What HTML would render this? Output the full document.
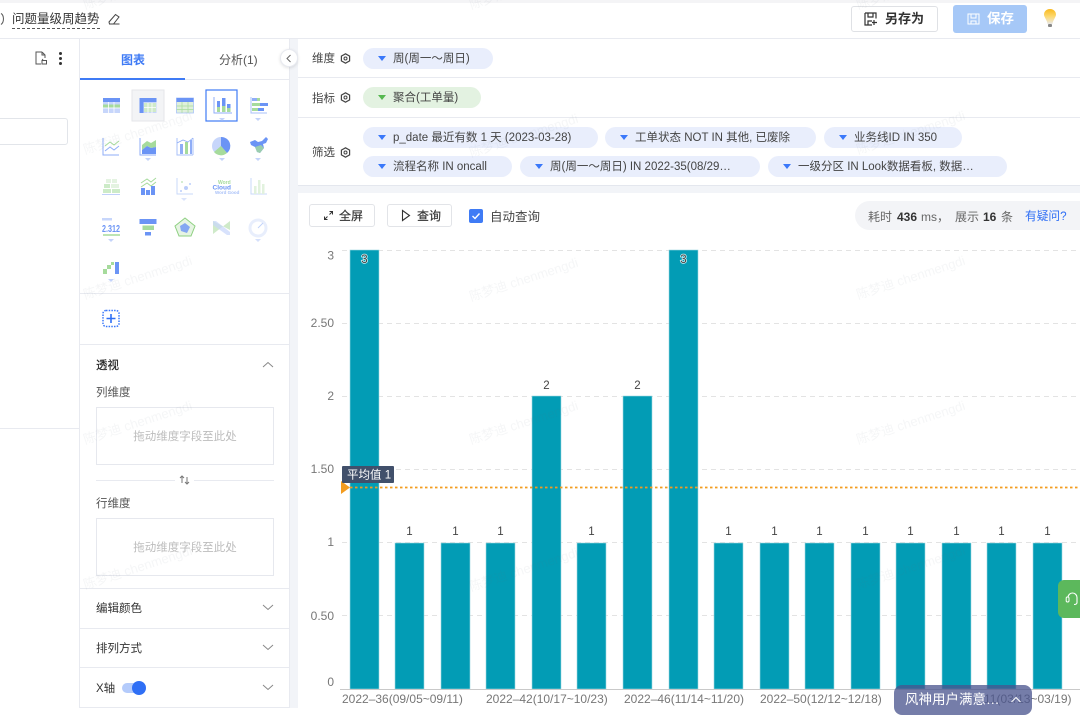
<!DOCTYPE html>
<html><head><meta charset="utf-8">
<style>
*{box-sizing:border-box}
html,body{margin:0;padding:0}
body{width:1080px;height:708px;overflow:hidden;position:relative;background:#fff;font-family:"Liberation Sans","Noto Sans CJK SC",sans-serif;color:#333;font-size:12px}
.a{position:absolute}
.t{position:absolute;white-space:nowrap;line-height:16px;margin-top:1px}
.line{position:absolute;background:#e8eaf0}
.pill{position:absolute;height:21px;border-radius:11px;background:#e9eefc;font-size:11.500px;line-height:22px;color:#444;white-space:nowrap;padding-left:30px}
.pill:before{content:"";position:absolute;left:15px;top:8px;border-left:4.500px solid transparent;border-right:4.500px solid transparent;border-top:5.500px solid #3a78fa}
.pill.g{background:#e3f2e1}
.pill.g:before{border-top-color:#55b84f}
.btn{position:absolute;background:#fff;border:1px solid #e2e4e8;border-radius:3px;font-size:12px;color:#333;white-space:nowrap}
.drop{position:absolute;left:96px;width:178px;height:58px;border:1px solid #e6e8ee;text-align:center;line-height:59px;color:#bdbdbd;font-size:11.500px}
.wm{position:absolute;white-space:nowrap;font-size:13px;line-height:20px;color:rgba(110,120,140,.065);transform:rotate(-18deg);transform-origin:left bottom;pointer-events:none;z-index:20}
svg{display:block}
</style></head><body>

<!-- top bar -->
<div class="a" style="left:0;top:0;width:1080px;height:3px;background:#f4f4f6"></div>
<svg class="a" style="left:0;top:12px" width="6" height="14"><path d="M1 1.500C4 3 4.500 10 1 12.500" fill="none" stroke="#555" stroke-width="1"/></svg>
<div class="t" style="left:12px;top:10px;font-size:12.500px;color:#333;border-bottom:1px dashed #555;height:18px;width:88px">问题量级周趋势</div>
<svg class="a" style="left:107px;top:12px" width="14" height="14"><path d="M2 10 8.500 2.500 12 5 6.500 12H2.500ZM5 12H12.500" fill="none" stroke="#444" stroke-width="1"/></svg>
<div class="btn" style="left:851px;top:6px;width:87px;height:26px;border-color:#dfe1e5;font-size:13px;font-weight:bold;line-height:24px;padding-left:33px">另存为</div>
<svg class="a" style="left:864px;top:12px" width="14" height="14"><path d="M1 1H12V6.500M1 1V13H8M4 1V5H9V1M4 13V9H8M10 8V13M8 10.500H13" fill="none" stroke="#333" stroke-width="1.200"/></svg>
<div class="a" style="left:953px;top:5px;width:74px;height:28px;background:#a6c8f7;border-radius:3px;color:#fff;font-size:13.500px;font-weight:bold;line-height:28px;padding-left:34px">保存</div>
<svg class="a" style="left:967px;top:13px" width="13" height="12"><path d="M1 1H12V11H1ZM4 1V5H9V1M4 11V8H9V11" fill="none" stroke="#fff" stroke-width="1"/></svg>
<svg class="a" style="left:1042px;top:8px" width="16" height="21"><defs><linearGradient id="b" x1="0" y1="0" x2="0" y2="1"><stop offset="0" stop-color="#f9b91e"/><stop offset=".5" stop-color="#fdd970"/><stop offset="1" stop-color="#e8e8e8"/></linearGradient></defs><path d="M8 1C3.500 1 2 4.500 2 6.500 2 9 5 12 5.500 16H10.500C11 12 14 9 14 6.500 14 4.500 12.500 1 8 1Z" fill="url(#b)"/><rect x="6" y="16" width="4" height="3" rx="1" fill="#888"/></svg>
<div class="line" style="left:0;top:38px;width:1080px;height:1px"></div>

<!-- left column -->
<svg class="a" style="left:34px;top:51px" width="14" height="14"><path d="M8 1H2V13H7M8 1 11 4V7M8 1V4H11" fill="none" stroke="#555" stroke-width="1"/><path d="M8 9.500H12.500V13H8Z M9 8 8 9.500" fill="none" stroke="#555" stroke-width="1"/></svg>
<div class="a" style="left:59px;top:52px;width:3px;height:3px;border-radius:2px;background:#333"></div>
<div class="a" style="left:59px;top:57px;width:3px;height:3px;border-radius:2px;background:#333"></div>
<div class="a" style="left:59px;top:62px;width:3px;height:3px;border-radius:2px;background:#333"></div>
<div class="a" style="left:-10px;top:118px;width:78px;height:27px;border:1px solid #e2e5ea;border-radius:3px"></div>
<div class="line" style="left:0;top:428px;width:80px;height:1px"></div>

<!-- config panel -->
<div class="line" style="left:79px;top:39px;width:1px;height:669px"></div>
<div class="a" style="left:290px;top:39px;width:8px;height:669px;background:#f2f4f8"></div>
<div class="line" style="left:289px;top:39px;width:1px;height:669px"></div>
<div class="t" style="left:121px;top:51px;color:#3f7bf5;font-size:12px;font-weight:bold">图表</div>
<div class="t" style="left:219px;top:51px;color:#555;font-size:12px">分析(1)</div>
<div class="line" style="left:80px;top:79px;width:210px;height:1px"></div>
<div class="a" style="left:80px;top:78px;width:105px;height:2px;background:#3f7bf5"></div>
<div class="a" style="left:280px;top:49px;width:18px;height:18px;border-radius:9px;background:#fff;border:1px solid #e8eaf0;box-shadow:0 1px 3px rgba(0,0,0,.12)"></div>
<svg class="a" style="left:285px;top:54px" width="8" height="9"><path d="M5.500 1 2 4.500 5.500 8" fill="none" stroke="#666" stroke-width="1"/></svg>

<svg class="a" style="left:80px;top:80px" width="210" height="210">
<g>
<rect x="52" y="10" width="32" height="31" fill="#f3f4f6" stroke="#e5e6ea"/>
<rect x="126" y="10" width="31" height="31" fill="#fff" stroke="#3f7bf5" stroke-width="1.200"/>
<!-- table1 -->
<rect x="23" y="18" width="17" height="15" fill="#c7d6fb"/><rect x="23" y="18" width="17" height="4" fill="#6b94f5"/><rect x="23" y="24.500" width="17" height="3" fill="#a6db9c"/><path d="M28.500 22V33M34 22V33M23 28H40" stroke="#fff" stroke-width=".8"/>
<!-- table2 -->
<rect x="59.500" y="18" width="17" height="15" fill="#c7d6fb"/><rect x="59.500" y="18" width="17" height="4" fill="#6b94f5"/><rect x="59.500" y="18" width="4" height="15" fill="#6b94f5"/><rect x="64" y="23" width="12" height="9" fill="#cfeac9"/><path d="M68 23V33M72 23V33M64 27.500H76" stroke="#fff" stroke-width=".8"/>
<!-- table3 -->
<rect x="96.500" y="18" width="17" height="15" fill="#dff0db" stroke="#aac3f9" stroke-width=".8"/><rect x="96.500" y="18" width="17" height="4" fill="#6b94f5"/><path d="M102 22V33M108 22V33M96.500 26H113.500M96.500 29.500H113.500" stroke="#a6db9c" stroke-width=".7"/>
<!-- stacked bar -->
<path d="M134 17V33H152" fill="none" stroke="#8fadf7"/><rect x="137" y="21" width="3" height="11" fill="#6b94f5"/><rect x="137" y="27" width="3" height="5" fill="#a6db9c"/><rect x="142" y="18" width="3.500" height="14" fill="#6b94f5"/><rect x="142" y="26" width="3.500" height="6" fill="#a6db9c"/><rect x="147" y="24" width="3.500" height="8" fill="#6b94f5"/><rect x="147" y="28" width="3.500" height="4" fill="#a6db9c"/><path d="M139 38H145L142 41Z" fill="#c4d3fa"/>
<!-- horiz bar -->
<path d="M171 17V33H187" fill="none" stroke="#a8c0f8"/><rect x="172" y="18" width="5" height="3" fill="#8fadf7"/><rect x="177" y="18" width="3" height="3" fill="#a6db9c"/><rect x="172" y="23" width="8" height="3" fill="#a6db9c"/><rect x="180" y="23" width="8" height="3" fill="#6b94f5"/><rect x="172" y="28" width="6" height="3" fill="#a6db9c"/><rect x="178" y="28" width="6" height="3" fill="#6b94f5"/><path d="M175 38H181L178 41Z" fill="#c4d3fa"/>
</g>
<!-- row 2 -->
<path d="M23 58V75H39" fill="none" stroke="#8fadf7"/><path d="M25 66 30 62 34 65 39 61" fill="none" stroke="#a6db9c"/><path d="M25 71 30 67 34 70 39 66" fill="none" stroke="#8fadf7"/>
<path d="M60 58V75H76" fill="none" stroke="#8fadf7"/><path d="M62 65 67 61 71 63 76 60V67L71 68 67 66 62 70Z" fill="#a6db9c"/><path d="M62 70 67 66 71 68 76 67V74H62Z" fill="#6b94f5"/><path d="M65 78H71L68 81Z" fill="#c4d3fa"/>
<path d="M97 58V75H113M113 58V75" fill="none" stroke="#a8c0f8"/><rect x="100" y="64" width="3" height="10" fill="#8fadf7"/><rect x="105" y="62" width="3" height="12" fill="#a6db9c"/><rect x="110" y="60" width="2" height="14" fill="#8fadf7"/><path d="M97 63 103 60 108 62 113 58" fill="none" stroke="#8fadf7" stroke-width=".8"/>
<circle cx="141" cy="66" r="9" fill="#c7d6fb"/><path d="M141 66V57A9 9 0 0 1 147 73Z" fill="#6b94f5"/><path d="M141 66 147 73A9 9 0 0 1 134 72Z" fill="#a6db9c"/><path d="M139 78H145L142 81Z" fill="#c4d3fa"/>
<path d="M170 62 175 60 178 62 182 61 186 57 188 59 186 63 183 64 184 68 180 73 177 72 175 67 171 65Z" fill="#6b94f5"/><path d="M175 67 181 65 184 68 180 73 177 72Z" fill="#a6db9c" opacity=".8"/><path d="M175 78H181L178 81Z" fill="#c4d3fa"/>
<!-- row 3 (faded) -->
<g opacity=".55">
<rect x="26" y="99" width="5" height="4" fill="#cfeac9"/><rect x="32" y="99" width="5" height="4" fill="#cfeac9"/><rect x="24" y="104" width="6" height="4" fill="#a6db9c"/><rect x="31" y="104" width="8" height="4" fill="#cfeac9"/><rect x="23" y="109" width="8" height="4" fill="#a6db9c"/><rect x="32" y="109" width="8" height="4" fill="#a6db9c"/><path d="M22 114.500H40" stroke="#8fadf7"/>
</g>
<path d="M61 103 67 99 71 102 76 98" fill="none" stroke="#a6db9c"/><path d="M61 107 67 103 71 106 76 102" fill="none" stroke="#a6db9c"/><rect x="61" y="108" width="4" height="7" fill="#6b94f5"/><rect x="66" y="110" width="4" height="5" fill="#6b94f5"/><rect x="71" y="106" width="4" height="9" fill="#6b94f5"/>
<g opacity=".6"><path d="M97 98V114H113" fill="none" stroke="#a8c0f8"/><circle cx="106" cy="108" r="2" fill="#8fadf7"/><circle cx="102" cy="102" r="1" fill="#a6db9c"/><circle cx="110" cy="104" r="1" fill="#8fadf7"/><circle cx="101" cy="111" r="1" fill="#8fadf7"/><path d="M101 118H107L104 121Z" fill="#c4d3fa"/></g>
<text x="138" y="104" font-size="5" fill="#a6db9c" font-weight="bold">Word</text>
<text x="132.500" y="109.500" font-size="6.500" fill="#6b94f5" font-weight="bold">Cloud</text>
<text x="135" y="114" font-size="4.500" fill="#a8c0f8" font-weight="bold">Word Good</text>
<g opacity=".6"><path d="M171 98V114H187" fill="none" stroke="#a8c0f8"/><rect x="174" y="106" width="2.500" height="8" fill="#cfeac9"/><rect x="178" y="100" width="2.500" height="14" fill="#cfeac9"/><rect x="182" y="104" width="2.500" height="10" fill="#cfeac9"/></g>
<!-- row 4 -->
<rect x="22" y="138" width="10" height="2.500" fill="#c7d6fb"/>
<text x="22" y="152" font-size="10" font-weight="bold" fill="#6b94f5" textLength="18" lengthAdjust="spacingAndGlyphs">2.312</text>
<path d="M23 155H40" stroke="#a6db9c" stroke-width="1.500"/><path d="M28 159H34L31 162Z" fill="#c4d3fa"/>
<path d="M59.500 139H76.500V144H59.500Z" fill="#6b94f5"/><path d="M62.500 145.500H74V150H62.500Z" fill="#a6db9c"/><path d="M65 152H71V155.500H65Z" fill="#6b94f5"/>
<path d="M105 138 115 146 111 156H99L95 146Z" fill="#e6f4e3" stroke="#8ed081"/><path d="M105 143 110 147 107 153 101 151 100 146Z" fill="#6b94f5" opacity=".8"/>
<path d="M133 141 150 150V141L133 154Z" fill="#cfeac9"/><path d="M133 141H136L150 152V155H147L133 145Z" fill="#c7d6fb" opacity=".7"/>
<g opacity=".7"><circle cx="178" cy="148" r="8" fill="none" stroke="#dfe8fc" stroke-width="3"/><path d="M178 148 183 143" stroke="#a8c0f8"/><path d="M175 159H181L178 162Z" fill="#c4d3fa"/></g>
<!-- row 5 -->
<rect x="23" y="189" width="4" height="5" fill="#a6db9c"/><rect x="27" y="185" width="4" height="4" fill="#a6db9c"/><rect x="31" y="182" width="3" height="3" fill="#a6db9c"/><rect x="35" y="182" width="4" height="12" fill="#6b94f5"/><path d="M28 199H34L31 202Z" fill="#c4d3fa"/>
</svg>

<div class="line" style="left:80px;top:293px;width:210px;height:1px"></div>
<svg class="a" style="left:102px;top:309px" width="19" height="20"><rect x="1" y="1.500" width="16" height="16" rx="3" fill="none" stroke="#3a78fa" stroke-width="1.500" stroke-dasharray="1.500 1.200"/><path d="M4.500 9.500H13.500M9 5V14" stroke="#2f6ff5" stroke-width="1.600"/></svg>
<div class="line" style="left:80px;top:344px;width:210px;height:1px"></div>
<div class="t" style="left:96px;top:357px;font-size:11.500px;color:#222;-webkit-text-stroke:.2px #222">透视</div>
<svg class="a" style="left:262px;top:361px" width="12" height="7"><path d="M1 6 6 1.500 11 6" fill="none" stroke="#888"/></svg>
<div class="t" style="left:96px;top:384px;font-size:11.500px;color:#555">列维度</div>
<div class="drop" style="top:407px">拖动维度字段至此处</div>
<div class="line" style="left:96px;top:480px;width:79px;height:1px"></div>
<div class="line" style="left:194px;top:480px;width:80px;height:1px"></div>
<svg class="a" style="left:179px;top:474px" width="11" height="12"><path d="M3 9V2M1 4 3 2 5 4M8 3V10M6 8 8 10 10 8" fill="none" stroke="#777"/></svg>
<div class="t" style="left:96px;top:495px;font-size:11.500px;color:#555">行维度</div>
<div class="drop" style="top:518px">拖动维度字段至此处</div>
<div class="line" style="left:80px;top:588px;width:210px;height:1px"></div>
<div class="t" style="left:96px;top:600px;font-size:11.500px;color:#333">编辑颜色</div>
<svg class="a" style="left:262px;top:604px" width="12" height="7"><path d="M1 1 6 5.500 11 1" fill="none" stroke="#888"/></svg>
<div class="line" style="left:80px;top:628px;width:210px;height:1px"></div>
<div class="t" style="left:96px;top:640px;font-size:11.500px;color:#333">排列方式</div>
<svg class="a" style="left:262px;top:644px" width="12" height="7"><path d="M1 1 6 5.500 11 1" fill="none" stroke="#888"/></svg>
<div class="line" style="left:80px;top:667px;width:210px;height:1px"></div>
<div class="t" style="left:96px;top:680px;font-size:11.500px;color:#333">X轴</div>
<div class="a" style="left:122px;top:683px;width:20px;height:10px;border-radius:5px;background:#b4cbfb"></div>
<div class="a" style="left:132px;top:681px;width:14px;height:14px;border-radius:7px;background:#2f6ff5"></div>
<svg class="a" style="left:262px;top:684px" width="12" height="7"><path d="M1 1 6 5.500 11 1" fill="none" stroke="#888"/></svg>
<div class="line" style="left:80px;top:707px;width:210px;height:1px"></div>

<!-- shelf -->
<div class="t" style="left:312px;top:50px;font-size:11.500px;color:#444">维度</div>
<div class="t" style="left:312px;top:90px;font-size:11.500px;color:#444">指标</div>
<div class="t" style="left:312px;top:144px;font-size:11.500px;color:#444">筛选</div>
<svg class="a" style="left:340px;top:53px" width="11" height="11"><path d="M5.500 .8 9.600 3.100V7.900L5.500 10.200 1.400 7.900V3.100Z" fill="none" stroke="#444" stroke-width="1.200"/><circle cx="5.500" cy="5.500" r="1.500" fill="none" stroke="#444" stroke-width="1"/></svg>
<svg class="a" style="left:340px;top:92px" width="11" height="11"><path d="M5.500 .8 9.600 3.100V7.900L5.500 10.200 1.400 7.900V3.100Z" fill="none" stroke="#444" stroke-width="1.200"/><circle cx="5.500" cy="5.500" r="1.500" fill="none" stroke="#444" stroke-width="1"/></svg>
<svg class="a" style="left:340px;top:147px" width="11" height="11"><path d="M5.500 .8 9.600 3.100V7.900L5.500 10.200 1.400 7.900V3.100Z" fill="none" stroke="#444" stroke-width="1.200"/><circle cx="5.500" cy="5.500" r="1.500" fill="none" stroke="#444" stroke-width="1"/></svg>
<div class="pill" style="left:363px;top:48px;width:130px">周(周一～周日)</div>
<div class="pill g" style="left:363px;top:87px;width:118px">聚合(工单量)</div>
<div class="pill" style="left:363px;top:127px;width:235px">p_date 最近有数 1 天 (2023-03-28)</div>
<div class="pill" style="left:605px;top:127px;width:211px">工单状态 NOT IN 其他, 已废除</div>
<div class="pill" style="left:824px;top:127px;width:138px">业务线ID IN 350</div>
<div class="pill" style="left:363px;top:156px;width:149px">流程名称 IN oncall</div>
<div class="pill" style="left:520px;top:156px;width:240px">周(周一～周日) IN 2022-35(08/29…</div>
<div class="pill" style="left:768px;top:156px;width:239px">一级分区 IN Look数据看板, 数据…</div>
<div class="line" style="left:298px;top:77px;width:782px;height:1px"></div>
<div class="line" style="left:298px;top:117px;width:782px;height:1px"></div>
<div class="a" style="left:298px;top:185px;width:782px;height:8px;background:#f2f4f8;border-top:1px solid #e4e7ee"></div>

<!-- toolbar -->
<div class="btn" style="left:309px;top:204px;width:66px;height:23px;line-height:23px;padding-left:29px;font-size:12px;-webkit-text-stroke:.15px #333">全屏</div>
<svg class="a" style="left:323px;top:210px" width="11" height="11"><path d="M1.500 9.500 4.500 6.500M6.500 4.500 9.500 1.500M6.500 1.500H9.500V4.500M1.500 6.500V9.500H4.500" fill="none" stroke="#333" stroke-width="1"/></svg>
<div class="btn" style="left:387px;top:204px;width:65px;height:23px;line-height:23px;padding-left:29px;font-size:12px;-webkit-text-stroke:.15px #333">查询</div>
<svg class="a" style="left:401px;top:209px" width="10" height="13"><path d="M1.500 1.500 8.500 6.500 1.500 11.500Z" fill="none" stroke="#333" stroke-width="1.100"/></svg>
<div class="a" style="left:469px;top:209px;width:14px;height:14px;border-radius:2px;background:#3f7bf5"></div>
<svg class="a" style="left:469px;top:209px" width="14" height="14"><path d="M3.500 7 6 9.500 10.500 4.500" fill="none" stroke="#fff" stroke-width="1.400"/></svg>
<div class="t" style="left:490px;top:208px;font-size:12.500px;color:#444">自动查询</div>
<div class="a" style="left:855px;top:201px;width:240px;height:29px;border-radius:15px;background:#f3f4f7"></div>
<div class="t" style="left:868px;top:208px;font-size:12px;color:#666">耗时</div>
<div class="t" style="left:897px;top:208px;font-size:12px;color:#333;font-weight:bold">436</div>
<div class="t" style="left:921px;top:208px;font-size:12px;color:#666">ms，</div>
<div class="t" style="left:955px;top:208px;font-size:12px;color:#666">展示</div>
<div class="t" style="left:983px;top:208px;font-size:12px;color:#333;font-weight:bold">16</div>
<div class="t" style="left:1001px;top:208px;font-size:12px;color:#666">条</div>
<div class="t" style="left:1025px;top:208px;font-size:11.700px;color:#2f6ff5">有疑问?</div>

<!-- chart -->
<svg class="a" style="left:298px;top:240px" width="782" height="468" font-family="'Liberation Sans','Noto Sans CJK SC',sans-serif">
<g stroke="#e3e3e3" stroke-dasharray="5 4"><path d="M44 10.500H782M44 83.500H782M44 156.500H782M44 229.500H782M44 302.500H782M44 375.500H782"/></g>
<g fill="#029cb5" stroke="#9fd8e1" stroke-width=".6">
<rect x="52" y="10" width="29" height="439"/>
<rect x="97" y="303" width="29" height="146"/>
<rect x="143" y="303" width="29" height="146"/>
<rect x="188" y="303" width="29" height="146"/>
<rect x="234" y="156" width="29" height="293"/>
<rect x="279" y="303" width="29" height="146"/>
<rect x="325" y="156" width="29" height="293"/>
<rect x="371" y="10" width="29" height="439"/>
<rect x="416" y="303" width="29" height="146"/>
<rect x="462" y="303" width="29" height="146"/>
<rect x="507" y="303" width="29" height="146"/>
<rect x="553" y="303" width="29" height="146"/>
<rect x="598" y="303" width="29" height="146"/>
<rect x="644" y="303" width="29" height="146"/>
<rect x="689" y="303" width="29" height="146"/>
<rect x="735" y="303" width="29" height="146"/>
</g>
<path d="M42 449.500H782" stroke="#c9c9c9"/>
<g font-size="12" fill="#777" text-anchor="end">
<text x="36" y="19.500">3</text><text x="36" y="87">2.50</text><text x="36" y="160">2</text><text x="36" y="233">1.50</text><text x="36" y="306">1</text><text x="36" y="380">0.50</text><text x="36" y="446">0</text>
</g>
<g font-size="11.500" fill="#444" text-anchor="middle">
<text x="66.500" y="23" fill="#444" stroke="#cfeef2" stroke-width="1.500" paint-order="stroke">3</text><text x="385.500" y="23" fill="#444" stroke="#cfeef2" stroke-width="1.500" paint-order="stroke">3</text>
<text x="111.500" y="295">1</text><text x="157.500" y="295">1</text><text x="202.500" y="295">1</text><text x="248.500" y="149">2</text><text x="293.500" y="295">1</text><text x="339.500" y="149">2</text>
<text x="430.500" y="295">1</text><text x="476.500" y="295">1</text><text x="521.500" y="295">1</text><text x="567.500" y="295">1</text><text x="612.500" y="295">1</text><text x="658.500" y="295">1</text><text x="703.500" y="295">1</text><text x="749.500" y="295">1</text>
</g>
<g font-size="12" fill="#777">
<text x="44" y="463">2022–36(09/05~09/11)</text>
<text x="188" y="463">2022–42(10/17~10/23)</text>
<text x="326" y="463">2022–46(11/14~11/20)</text>
<text x="462" y="463">2022–50(12/12~12/18)</text>
<text x="686" y="463">11(03/13~03/19)</text>
</g>
<path d="M52 247.500H782" stroke="#f39c1f" stroke-width="1.800" stroke-dasharray="2.500 2.500"/>
<path d="M43 241V254L52 247.500Z" fill="#f39c1f"/>
<rect x="44" y="226" width="52" height="17" rx="1" fill="#41506b"/>
<text x="49" y="238.500" font-size="11.500" fill="#fff">平均值 1</text>
</svg>

<!-- float widgets -->
<div class="a" style="left:1058px;top:580px;width:30px;height:38px;background:#5cb85c;border-radius:6px 0 0 6px"></div>
<svg class="a" style="left:1065px;top:591px" width="15" height="16"><path d="M3 9V6.500A4.500 4.500 0 0 1 12 6.500V11.500Q12 13.500 9 13.500" fill="none" stroke="#fff" stroke-width="1.100"/><rect x="1.200" y="6" width="2.800" height="5" rx="1.200" fill="#5cb85c" stroke="#fff"/></svg>
<div class="a" style="left:894px;top:685px;width:138px;height:30px;background:rgba(74,84,142,.76);border-radius:8px;color:#fff;font-size:13.500px;line-height:29px;padding-left:11px;z-index:5;white-space:nowrap">风神用户满意…</div>
<svg class="a" style="left:1010px;top:696px;z-index:6" width="12" height="7"><path d="M1.500 6 6 1.500 10.500 6" fill="none" stroke="#fff" stroke-width="1"/></svg>

<!-- watermarks -->
<div class="wm" style="left:87px;top:-5px">陈梦迪 chenmengdi</div>
<div class="wm" style="left:87px;top:140px">陈梦迪 chenmengdi</div>
<div class="wm" style="left:87px;top:285px">陈梦迪 chenmengdi</div>
<div class="wm" style="left:87px;top:430px">陈梦迪 chenmengdi</div>
<div class="wm" style="left:87px;top:575px">陈梦迪 chenmengdi</div>
<div class="wm" style="left:473px;top:-5px">陈梦迪 chenmengdi</div>
<div class="wm" style="left:473px;top:143px">陈梦迪 chenmengdi</div>
<div class="wm" style="left:473px;top:287px">陈梦迪 chenmengdi</div>
<div class="wm" style="left:473px;top:430px">陈梦迪 chenmengdi</div>
<div class="wm" style="left:473px;top:577px">陈梦迪 chenmengdi</div>
<div class="wm" style="left:860px;top:-5px">陈梦迪 chenmengdi</div>
<div class="wm" style="left:860px;top:140px">陈梦迪 chenmengdi</div>
<div class="wm" style="left:860px;top:285px">陈梦迪 chenmengdi</div>
<div class="wm" style="left:860px;top:430px">陈梦迪 chenmengdi</div>
<div class="wm" style="left:860px;top:575px">陈梦迪 chenmengdi</div>
</body></html>
